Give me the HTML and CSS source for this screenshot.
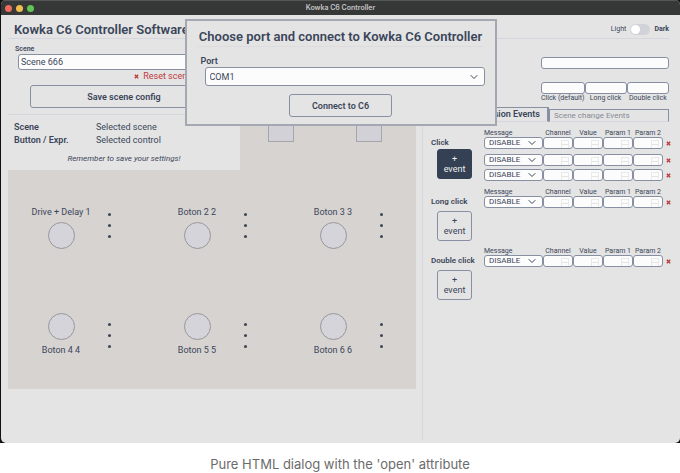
FILE: index.html
```html
<!DOCTYPE html>
<html lang="en">
<head>
<meta charset="utf-8">
<meta name="viewport" content="width=device-width, initial-scale=1">
<title>Kowka C6 Controller</title>
<link rel="stylesheet" href="styles.css">
</head>
<body>
<svg width="0" height="0" class="defs" aria-hidden="true">
  <symbol id="chevron" viewBox="0 0 8 8"><path d="M1 2.5 4 5.5 7 2.5" fill="none" stroke="currentColor" stroke-width="1" stroke-linecap="round" stroke-linejoin="round"/></symbol>
  <symbol id="cross" viewBox="0 0 6 6"><path d="M1 1 5 5M5 1 1 5" fill="none" stroke="currentColor" stroke-width="1.6"/></symbol>
</svg>
<figure class="figure">
  <div class="backdrop">
  <div class="window">
    <div class="titlebar">
      <span class="lights"><i class="light red"></i><i class="light yellow"></i><i class="light green"></i></span>
      <span class="titlebar-text">Kowka C6 Controller</span>
    </div>
    <header class="header">
      <h1>Kowka C6 Controller Software</h1>
      <div class="theme">
        <span>Light</span>
        <input type="checkbox" class="switch" aria-label="Dark theme">
        <strong>Dark</strong>
      </div>
    </header>
    <main class="main">
      <section class="board">
        <div class="board-top">
          <div class="scene-panel">
            <form class="scene-form">
              <label for="scene">Scene</label>
              <input id="scene" class="field scene-input" type="text" value="Scene 666">
              <button type="button" class="reset"><svg class="cross"><use href="#cross"/></svg>Reset scene</button>
              <button type="button" class="button save">Save scene config</button>
            </form>
            <dl class="selection">
              <dt>Scene</dt><dd>Selected scene</dd>
              <dt>Button / Expr.</dt><dd>Selected control</dd>
            </dl>
            <p class="reminder">Remember to save your settings!</p>
          </div>
          <div class="pedals">
            <button type="button" class="pedal" aria-label="Expression 1"></button>
            <button type="button" class="pedal" aria-label="Expression 2"></button>
          </div>
        </div>
        <div class="knobs">
          <div class="cell"><div class="knob"><label for="k1">Drive + Delay 1</label><button id="k1" type="button"></button></div><div class="dots"><i></i><i></i><i></i></div></div>
          <div class="cell"><div class="knob"><label for="k2">Boton 2 2</label><button id="k2" type="button"></button></div><div class="dots"><i></i><i></i><i></i></div></div>
          <div class="cell"><div class="knob"><label for="k3">Boton 3 3</label><button id="k3" type="button"></button></div><div class="dots"><i></i><i></i><i></i></div></div>
          <div class="cell"><div class="knob below"><label for="k4">Boton 4 4</label><button id="k4" type="button"></button></div><div class="dots"><i></i><i></i><i></i></div></div>
          <div class="cell"><div class="knob below"><label for="k5">Boton 5 5</label><button id="k5" type="button"></button></div><div class="dots"><i></i><i></i><i></i></div></div>
          <div class="cell"><div class="knob below"><label for="k6">Boton 6 6</label><button id="k6" type="button"></button></div><div class="dots"><i></i><i></i><i></i></div></div>
        </div>
      </section>
      <section class="details">
        <div class="names">
          <input class="field" type="text" aria-label="Name">
          <div class="aliases">
            <div><input id="a1" class="field" type="text"><label for="a1">Click (default)</label></div>
            <div><input id="a2" class="field" type="text"><label for="a2">Long click</label></div>
            <div><input id="a3" class="field" type="text"><label for="a3">Double click</label></div>
          </div>
        </div>
        <div class="tabs">
          <button type="button" class="tab active">Expression Events</button>
          <button type="button" class="tab">Scene change Events</button>
        </div>
        <div class="groups">
          <div class="group">
            <div class="group-side"><h2>Click</h2><button type="button" class="button add filled">+<br>event</button></div>
            <div class="events">
              <div class="event heads"><span>Message</span><span>Channel</span><span>Value</span><span>Param 1</span><span>Param 2</span></div>
              <div class="event first"><span class="select"><select aria-label="Message"><option>DISABLE</option></select><svg><use href="#chevron"/></svg></span><span class="num"><input aria-label="Channel"></span><span class="num"><input aria-label="Value"></span><span class="num"><input aria-label="Param 1"></span><span class="num"><input aria-label="Param 2"></span><button type="button" class="remove" aria-label="Remove"><svg class="cross"><use href="#cross"/></svg></button></div>
              <div class="event"><span class="select"><select aria-label="Message"><option>DISABLE</option></select><svg><use href="#chevron"/></svg></span><span class="num"><input aria-label="Channel"></span><span class="num"><input aria-label="Value"></span><span class="num"><input aria-label="Param 1"></span><span class="num"><input aria-label="Param 2"></span><button type="button" class="remove" aria-label="Remove"><svg class="cross"><use href="#cross"/></svg></button></div>
              <div class="event"><span class="select"><select aria-label="Message"><option>DISABLE</option></select><svg><use href="#chevron"/></svg></span><span class="num"><input aria-label="Channel"></span><span class="num"><input aria-label="Value"></span><span class="num"><input aria-label="Param 1"></span><span class="num"><input aria-label="Param 2"></span><button type="button" class="remove" aria-label="Remove"><svg class="cross"><use href="#cross"/></svg></button></div>
            </div>
          </div>
          <div class="group">
            <div class="group-side spaced"><h2>Long click</h2><button type="button" class="button add">+<br>event</button></div>
            <div class="events">
              <div class="event heads"><span>Message</span><span>Channel</span><span>Value</span><span>Param 1</span><span>Param 2</span></div>
              <div class="event first"><span class="select"><select aria-label="Message"><option>DISABLE</option></select><svg><use href="#chevron"/></svg></span><span class="num"><input aria-label="Channel"></span><span class="num"><input aria-label="Value"></span><span class="num"><input aria-label="Param 1"></span><span class="num"><input aria-label="Param 2"></span><button type="button" class="remove" aria-label="Remove"><svg class="cross"><use href="#cross"/></svg></button></div>
            </div>
          </div>
          <div class="group">
            <div class="group-side spaced"><h2>Double click</h2><button type="button" class="button add">+<br>event</button></div>
            <div class="events">
              <div class="event heads"><span>Message</span><span>Channel</span><span>Value</span><span>Param 1</span><span>Param 2</span></div>
              <div class="event first"><span class="select"><select aria-label="Message"><option>DISABLE</option></select><svg><use href="#chevron"/></svg></span><span class="num"><input aria-label="Channel"></span><span class="num"><input aria-label="Value"></span><span class="num"><input aria-label="Param 1"></span><span class="num"><input aria-label="Param 2"></span><button type="button" class="remove" aria-label="Remove"><svg class="cross"><use href="#cross"/></svg></button></div>
            </div>
          </div>
        </div>
      </section>
    </main>
    <dialog open class="dialog">
      <h2>Choose port and connect to Kowka C6 Controller</h2>
      <label for="port">Port</label>
      <span class="select port"><select id="port"><option>COM1</option></select><svg><use href="#chevron"/></svg></span>
      <button type="button" class="button connect">Connect to C6</button>
    </dialog>
  </div>
  </div>
  <figcaption>Pure HTML dialog with the 'open' attribute</figcaption>
</figure>
</body>
</html>
```
FILE: styles.css
```css
:root {
  --bg: #e4e4e4;
  --ink: #3b465a;
  --line: #8790a2;
  --rule: #d5d6de;
  --red: #bd3c3c;
}

* { box-sizing: border-box; }

body {
  margin: 0;
  background: #fff;
  color: var(--ink);
  font: 9px/12px Roboto, "Liberation Sans", sans-serif;
}

button, input, select { font: inherit; color: inherit; margin: 0; }
h1, h2, p, dl, dd { margin: 0; }
svg { display: block; }
.defs { position: absolute; }
.figure { margin: 0; }
.backdrop { background: #111; padding-left: 1px; }

.window {
  position: relative;
  background: var(--bg);
  border-radius: 5px;
  overflow: hidden;
}

.titlebar {
  display: grid;
  grid-template-columns: 1fr auto 1fr;
  align-items: center;
  height: 15px;
  background: #363837;
  border-top: 1px solid #555756;
  color: #c4c4c4;
  font-family: Inter, "Liberation Sans", sans-serif;
  font-size: 7px;
  font-weight: 600;
}
.lights { display: flex; gap: 4px; padding-left: 4px; }
.light { width: 7px; height: 7px; border-radius: 50%; }
.red { background: #ed6a5e; }
.yellow { background: #f0bd4f; }
.green { background: #61c454; }

.header {
  display: flex;
  align-items: center;
  justify-content: space-between;
  height: 24px;
  margin: 0 11px 0 7px;
  padding: 7px 0 0 6px;
  border-bottom: 1px solid var(--rule);
}
.header h1 { font-size: 13px; line-height: 16px; font-weight: 600; white-space: nowrap; }
.theme { display: flex; align-items: center; gap: 4px; font-size: 7px; padding-bottom: 2px; }
.switch {
  appearance: none;
  width: 20px;
  height: 11px;
  border-radius: 6px;
  background: #d2d3d8;
}
.switch::before {
  content: "";
  display: block;
  width: 9px;
  height: 9px;
  margin: 1px;
  border-radius: 50%;
  background: #fff;
}

.main {
  display: grid;
  grid-template-columns: minmax(0, 1fr) 258px;
  gap: 6px;
  padding-left: 7px;
}

.field, .select select, .num input {
  display: block;
  width: 100%;
  height: 12px;
  padding: 0 3px;
  border: 1px solid var(--line);
  border-radius: 3px;
  background: #fcfcfc;
}
.button {
  padding: 0;
  border: 1px solid var(--line);
  border-radius: 3px;
  background: transparent;
  font-weight: 600;
}

.board { background: #d7d3d1; margin-bottom: 54px; padding-bottom: 33px; }
.board-top { display: flex; }
.scene-panel { width: 232px; height: 131px; background: var(--bg); }
.scene-form {
  display: flex;
  flex-direction: column;
  height: 76px;
  padding: 6px 6px 0 7px;
  border-bottom: 1px solid var(--rule);
}
.scene-form label { font-size: 7px; line-height: 8px; font-weight: 600; }
.scene-input { height: 16px; width: auto; margin: 1px 0 0 3px; padding: 0 2px; }
.reset {
  display: flex;
  align-items: center;
  align-self: flex-end;
  gap: 4px;
  margin: 0 42px 0 0;
  padding: 0;
  border: 0;
  background: none;
  color: var(--red);
}
.cross { width: 5px; height: 5px; color: var(--red); }
.save { height: 23px; margin: 3px 16px 0 15px; }
.selection {
  display: grid;
  grid-template-columns: 82px 1fr;
  padding: 6px 0 0 6px;
  line-height: 13px;
}
.selection dt { font-weight: 600; }
.reminder { padding-top: 6px; text-align: center; font-size: 8px; font-style: italic; }

.pedals { display: flex; align-items: flex-end; gap: 62px; padding: 0 0 28px 28px; }
.pedal { width: 26px; height: 26px; padding: 0; border: 1px solid #a5a6ac; background: #d2d1d7; }

.knobs {
  display: grid;
  grid-template-columns: repeat(3, 1fr);
  gap: 64px 0;
  padding-top: 36px;
}
.cell { display: flex; }
.knob { display: flex; flex-direction: column; align-items: center; gap: 4px; width: 106px; }
.knob.below { flex-direction: column-reverse; }
.knob button { width: 27px; height: 27px; padding: 0; border: 1px solid #97979b; border-radius: 50%; background: #d5d4da; }
.dots { display: flex; flex-direction: column; gap: 8px; padding-top: 7px; margin-left: -6px; }
.below + .dots { padding-top: 10px; }
.dots i { width: 3px; height: 3px; border-radius: 50%; background: #3d4656; }

.details { border-left: 1px solid var(--rule); margin-bottom: 3px; padding: 18px 11px 0 8px; }
.names { width: 128px; margin-left: auto; }
.aliases { display: grid; grid-template-columns: repeat(3, 1fr); margin-top: 13px; text-align: center; }
.aliases label { display: block; font-size: 7px; line-height: 8px; white-space: nowrap; }
.tabs { display: flex; align-items: flex-end; height: 15px; margin-top: 5px; }
.tab {
  height: 13px;
  flex: 0 0 120px;
  padding: 0 4px;
  border: 1px solid var(--line);
  border-bottom-color: var(--rule);
  background: none;
  color: #858a94;
  font-size: 8px;
  line-height: 11px;
  text-align: left;
}
.tab.active {
  flex: 1;
  height: 15px;
  padding-right: 7px;
  border-right: 2px solid var(--line);
  color: var(--ink);
  font-size: 9px;
  font-weight: 600;
  text-align: right;
}

.groups { display: grid; gap: 5px; padding-top: 7px; }
.group { display: grid; grid-template-columns: 53px 1fr; min-height: 54px; }
.group-side { padding-top: 8px; }
.group-side h2 { font-size: 8px; line-height: 12px; font-weight: 600; white-space: nowrap; }
.add { display: block; width: 35px; height: 30px; margin: 0 0 0 6px; font-weight: 400; line-height: 10px; }
.spaced .add { margin-top: 3px; }
.filled { background: #344054; border-color: #344054; color: #eee; }
.events { display: flex; flex-direction: column; gap: 3px; margin-right: -4px; }
.event { display: grid; grid-template-columns: 59px repeat(4, 30px) 1fr; align-items: center; }
.event.heads { height: 8px; margin-bottom: -3px; font-size: 7px; line-height: 8px; text-align: center; white-space: nowrap; }
.heads span:first-child { text-align: left; }
.event.first { margin-bottom: 2px; }
.event .select select { border-radius: 3px; font-size: 8px; line-height: 10px; padding-left: 4px; }

.select { position: relative; display: block; }
.select select { appearance: none; }
.select svg { position: absolute; right: 7px; top: 2px; width: 8px; height: 8px; pointer-events: none; }

.num { position: relative; }
.num::after {
  content: "";
  position: absolute;
  right: 4px;
  top: 3px;
  width: 6px;
  height: 7px;
  border: 1px solid #e9e9e9;
  border-bottom: 0;
  background: linear-gradient(#e4e4e4, #e4e4e4) center / 100% 1px no-repeat;
  pointer-events: none;
}
.remove { display: block; width: 5px; padding: 0; margin-left: 3px; border: 0; background: none; }

.dialog {
  position: absolute;
  top: 19px;
  left: 0;
  right: 0;
  display: flex;
  flex-direction: column;
  width: 312px;
  margin: 0 auto;
  padding: 8px 10px 7px;
  border: 2px solid #a3a8b2;
  background: var(--bg);
  color: var(--ink);
}
.dialog h2 {
  margin-bottom: 9px;
  padding-bottom: 1px;
  border-bottom: 1px solid #dcdcdf;
  font-size: 13px;
  line-height: 16px;
  font-weight: 600;
  text-align: center;
  white-space: nowrap;
}
.dialog label { padding-left: 4px; font-weight: 600; line-height: 11px; }
.port { margin-left: 8px; }
.port select { height: 19px; padding-left: 4px; }
.port svg { top: 6px; }
.connect { align-self: center; width: 103px; height: 23px; margin-top: 8px; }

figcaption {
  padding: 13px 0 12px;
  color: #6b6b6b;
  font: 13px/17px Inter, "Liberation Sans", sans-serif;
  text-align: center;
}
```
